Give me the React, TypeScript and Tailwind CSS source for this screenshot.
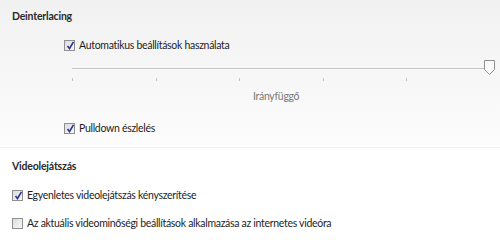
import React from 'react';

const font = { fontFamily: 'Lato, "Open Sans", sans-serif' };

const Check: React.FC<{ checked?: boolean }> = ({ checked }) => (
  <span className="relative inline-flex h-[11px] w-[11px] shrink-0 items-center justify-center border border-[#8e8f8f] bg-gradient-to-br from-[#dcdcdc] to-[#f8f8f8]">
    {checked && (
      <svg width="9" height="9" viewBox="0 0 9 9" className="absolute left-[1px] top-[0px]">
        <path d="M1.5 5 L3.5 7.5 L7.5 0.8" fill="none" stroke="#2b3596" strokeWidth="1.6" />
      </svg>
    )}
  </span>
);

const Row: React.FC<{ checked?: boolean; label: string; className?: string }> = ({
  checked,
  label,
  className,
}) => (
  <div className={`flex h-4 items-center gap-[4px] ${className ?? ''}`}>
    <Check checked={checked} />
    <span className="text-[10.5px] leading-4 tracking-[-0.3px] text-[#1e1e1e]">{label}</span>
  </div>
);

const ticks = ['left-0', 'left-[84px]', 'left-[167px]', 'left-[251px]', 'left-[334px]'];

export default function App() {
  return (
    <div className="h-[240px] w-[500px] overflow-hidden bg-white" style={font}>
      <div className="h-[148px] border-b border-[#f2f2f2] bg-gradient-to-b from-[#f1f1f1] to-[#fcfcfc] pl-3 pt-[8px]">
        <div className="text-[10.5px] font-bold leading-4 tracking-[-0.2px] text-[#2a2a2a]">Deinterlacing</div>
        <Row checked label="Automatikus beállítások használata" className="ml-[52px] mt-[13px]" />
        <div className="relative ml-[60px] mt-[6px] h-[20px] w-[424px]">
          <div className="absolute left-0 right-[6px] top-[9px] h-[2px] border-t border-[#c4c4c4] border-b border-b-[#fbfbfb]" />
          {ticks.map(t => (
            <div key={t} className={`absolute top-[19px] h-[3px] w-px bg-[#c4c4c4] ${t}`} />
          ))}
          <svg width="12" height="16" viewBox="0 0 12 16" className="absolute left-[412px] top-[1px]">
            <path d="M0.5 0.5 H10.5 V9.5 L5.5 14.5 L0.5 9.5 Z" fill="#fafafa" stroke="#8f8f8f" />
          </svg>
        </div>
        <div className="mt-[9px] pl-[241px] text-[10.5px] leading-4 tracking-[-0.3px] text-[#7a7a7a]">Irányfüggő</div>
        <Row checked label="Pulldown észlelés" className="ml-[52px] mt-[16px]" />
      </div>
      <div className="pl-3">
        <div className="mt-[10px] text-[10.5px] font-bold leading-4 tracking-[-0.2px] text-[#2a2a2a]">Videolejátszás</div>
        <Row checked label="Egyenletes videolejátszás kényszerítése" className="mt-[13px]" />
        <Row label="Az aktuális videominőségi beállítások alkalmazása az internetes videóra" className="mt-[12px]" />
      </div>
    </div>
  );
}
